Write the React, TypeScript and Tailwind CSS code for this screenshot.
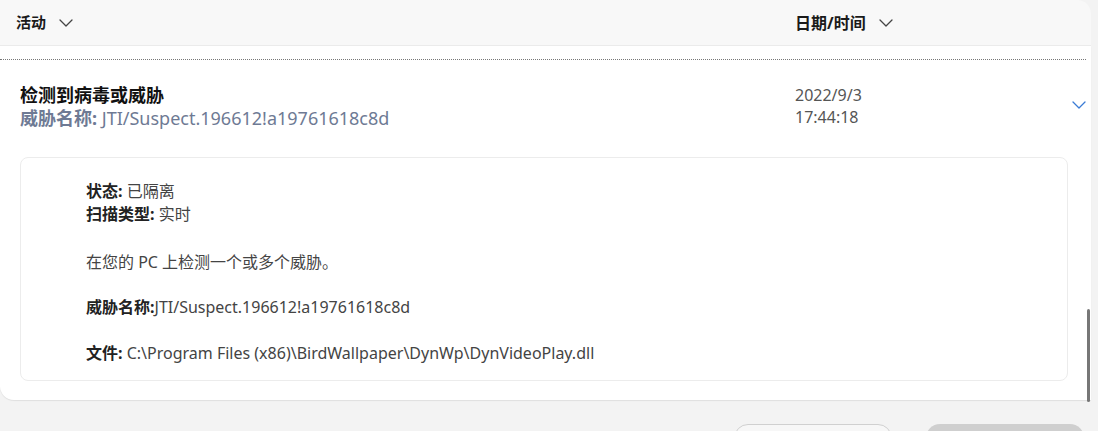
const font = { fontFamily: '"Noto Sans", "Noto Sans CJK SC", sans-serif' };

function Chevron({ className }: { className?: string }) {
  return (
    <svg width="14" height="8" viewBox="0 0 14 8" fill="none" className={className}>
      <polyline points="1,1 7,7 13,1" stroke="currentColor" strokeWidth="1.3" strokeLinecap="round" strokeLinejoin="round" />
    </svg>
  );
}

function Label({ k, v, tight }: { k: string; v: string; tight?: boolean }) {
  return (
    <div className="leading-[23px]">
      <span className="font-bold text-[#222]">{k}:</span>
      {tight ? "" : " "}
      <span>{v}</span>
    </div>
  );
}

export default function App() {
  return (
    <div className="w-[1098px] h-[431px] overflow-hidden bg-[#f3f3f3] text-[#333]" style={font}>
      <div className="flex">
        <div className="w-[1091px] shrink-0">
          <div className="h-[46px] bg-[#f8f8f8] rounded-tr-[14px] flex items-center border-b border-[#ebebeb]">
            <div className="w-[795px] pl-4 flex items-center gap-[13px] text-[15px] font-bold text-[#1a1a1a]">
              活动 <Chevron className="text-[#444]" />
            </div>
            <div className="flex items-center gap-[13px] text-[16px] font-bold text-[#1a1a1a]">
              日期/时间 <Chevron className="text-[#444]" />
            </div>
          </div>
          <div className="bg-white rounded-bl-[14px] h-[354px] shadow-[0_1px_1px_rgba(0,0,0,0.08)] pt-[13px]">
            <div className="border-t border-dotted border-[#777] mr-[5px]" />
            <div className="flex items-start h-[97px] pt-[23px]">
              <div className="w-[795px] pl-5">
                <div className="text-[18px] font-bold text-[#111] leading-[24px]">检测到病毒或威胁</div>
                <div className="text-[18px] leading-[22px] text-[#6e7a94]">
                  <span className="font-bold">威胁名称:</span> JTI/Suspect.196612!a19761618c8d
                </div>
              </div>
              <div className="flex-1 text-[16px] leading-[22px] text-[#555] pt-[1px]">
                <div>2022/9/3</div>
                <div>17:44:18</div>
              </div>
              <Chevron className="text-[#3a7bd5] mt-[18px] mr-[5px]" />
            </div>
            <div className="mx-5 mr-[23px] h-[224px] rounded-lg border border-[#ececec] pl-[65px] pt-[22px] text-[16px] text-[#444]">
              <Label k="状态" v="已隔离" />
              <Label k="扫描类型" v="实时" />
              <div className="leading-[23px] mt-[25px]">在您的 PC 上检测一个或多个威胁。</div>
              <div className="mt-[22px]">
                <Label k="威胁名称" v="JTI/Suspect.196612!a19761618c8d" tight />
              </div>
              <div className="mt-[23px]">
                <Label k="文件" v="C:\Program Files (x86)\BirdWallpaper\DynWp\DynVideoPlay.dll" />
              </div>
            </div>
          </div>
        </div>
        <div className="flex-1 relative">
          <div className="absolute left-[-4px] top-[309px] w-[3px] h-[93px] rounded-full bg-[#777]" />
        </div>
      </div>
      <div className="flex justify-end gap-[34px] pr-[14px] pt-[24px]">
        <div className="w-[158px] h-[30px] rounded-[14px] border border-[#d0d0d0] bg-[#f7f7f7]" />
        <div className="w-[158px] h-[30px] rounded-[14px] bg-[#cfcfcf]" />
      </div>
    </div>
  );
}
